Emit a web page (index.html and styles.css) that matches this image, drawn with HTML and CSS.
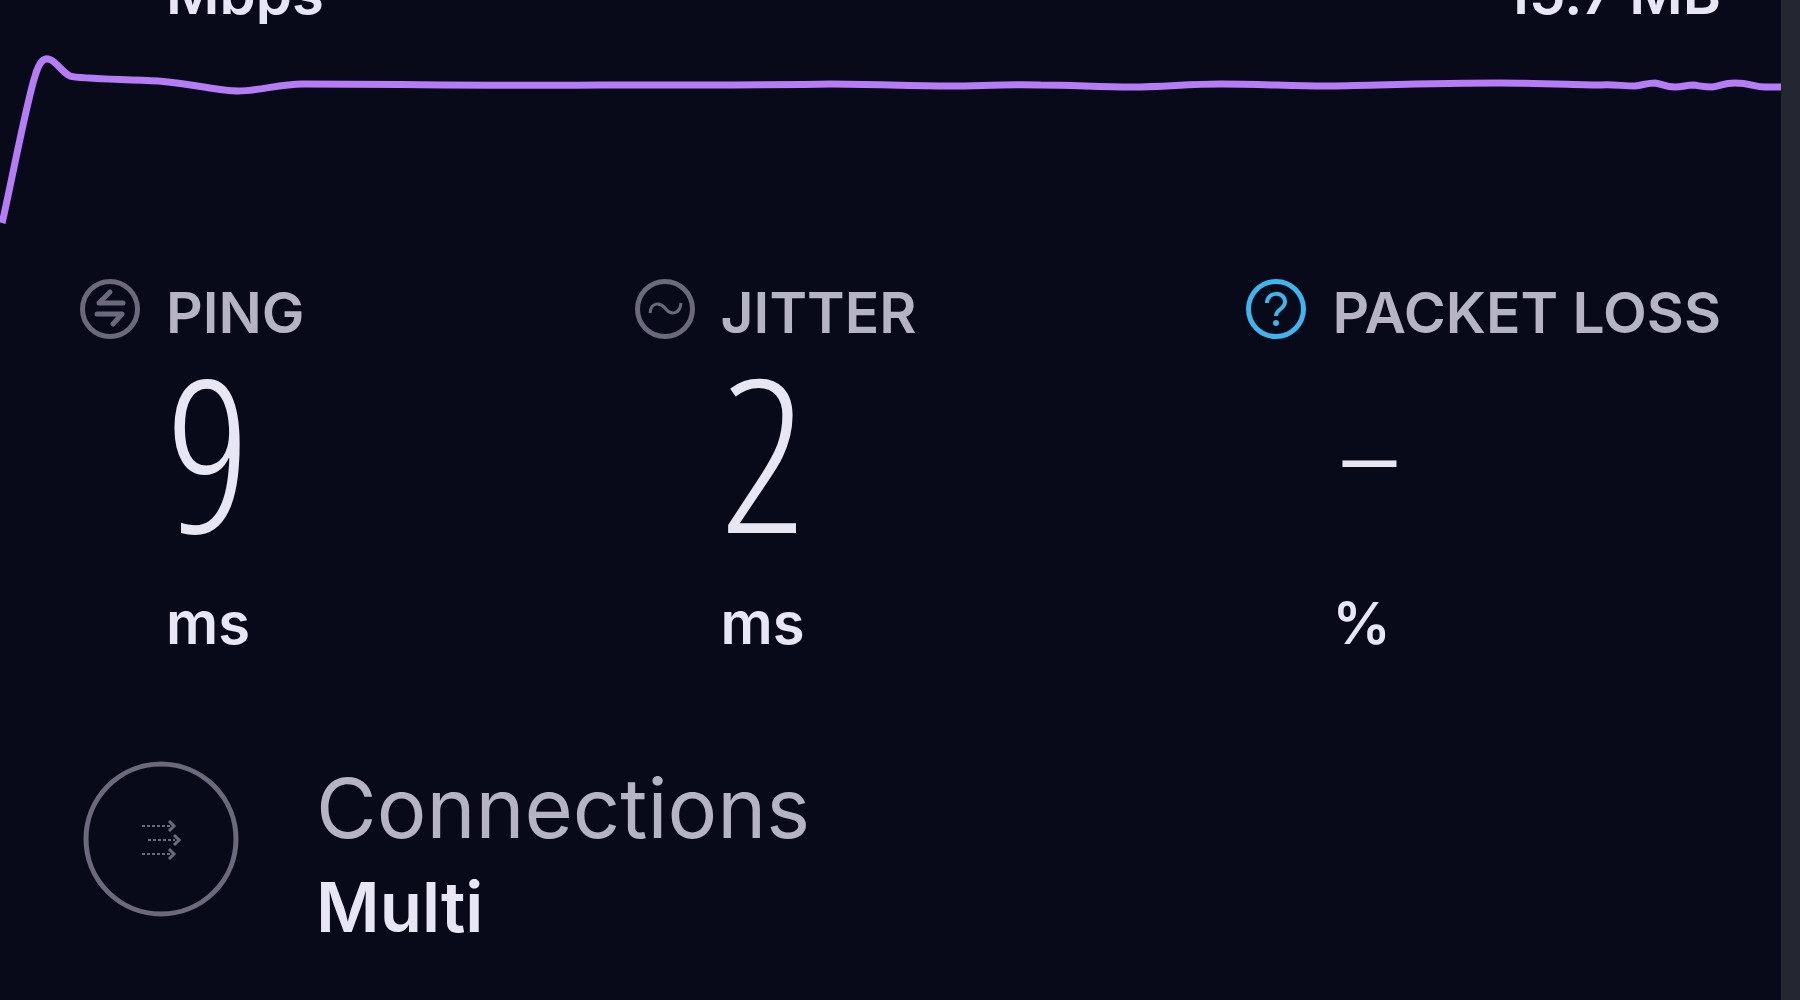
FILE: index.html
```html
<!DOCTYPE html>
<html lang="en">
<head>
  <meta charset="UTF-8" />
  <meta name="viewport" content="width=device-width, initial-scale=1" />
  <title>Speed Test Result</title>
  <link rel="stylesheet" href="styles.css">
</head>
<body>
  <main class="panel">
    <div class="speed-row">
      <span>Mbps</span>
      <span>15.7 MB</span>
    </div>

    <svg class="speed-graph" viewBox="0 24 1780 216" fill="none" aria-hidden="true">
      <path d="M2 223 C9 194 26 104 35 76 C39 62 44 56 51 60 C58 64 63 73 70 76 C82 79 125 79 158 81 C195 84 218 91 238 91 C258 91 280 84 302 84 C400 84 500 86 600 85 C700 85 780 85 830 84 C870 84 910 86 950 86 C980 86 1000 84 1040 85 C1070 85 1100 87 1130 87 C1165 87 1185 84 1220 84 C1260 84 1290 86 1325 86 C1380 85 1440 83 1500 83 C1540 83 1580 85 1600 85 C1612 84 1622 86 1634 86 C1642 85 1647 83 1654 83 C1662 84 1664 87 1674 87 C1682 87 1685 85 1692 85 C1700 86 1704 87 1711 87 C1720 86 1722 83 1734 83 C1749 83 1754 87 1764 87 L1781 87" />
    </svg>

    <section class="metrics">
      <div class="metric">
        <div class="metric-label">
          <svg class="metric-icon" viewBox="0 0 60 60" aria-hidden="true">
            <circle cx="30" cy="30" r="27.5" />
            <path d="M43 24 H19 L30 13 M17 35 H42 L33 45" stroke-linecap="round" stroke-linejoin="round" />
          </svg>
          <span>PING</span>
        </div>
        <div class="metric-value">9</div>
        <div class="metric-unit">ms</div>
      </div>

      <div class="metric">
        <div class="metric-label">
          <svg class="metric-icon" viewBox="0 0 60 60" aria-hidden="true">
            <circle cx="30" cy="30" r="27.5" />
            <path d="M15 34 C16 23 25 23 30 29 C36 37 45 35 46 24" stroke-width="3" />
          </svg>
          <span>JITTER</span>
        </div>
        <div class="metric-value">2</div>
        <div class="metric-unit">ms</div>
      </div>

      <div class="metric">
        <div class="metric-label">
          <button class="help" type="button" aria-label="About packet loss">
            <svg class="metric-icon metric-icon-help" viewBox="0 0 60 60" aria-hidden="true">
              <circle cx="30" cy="30" r="27.5" />
              <path d="M21 24 C21 12 39 12 39 23 C39 30 30 30 30 37" stroke-width="4" />
              <circle class="dot" cx="30" cy="44" r="3" />
            </svg>
          </button>
          <span>PACKET LOSS</span>
        </div>
        <div class="metric-value metric-value-empty">–</div>
        <div class="metric-unit">%</div>
      </div>
    </section>

    <section class="connections">
      <svg class="connections-icon" viewBox="0 0 160 160" aria-hidden="true">
        <circle cx="81" cy="80" r="75" stroke-width="5" />
        <path d="M62 67 H90 M68 81 H95 M62 95 H90" stroke-width="2" stroke-dasharray="3 2" />
        <path d="M89 62 L94 67 L89 72 M94 76 L99 81 L94 86 M89 90 L94 95 L89 100" stroke-width="3" />
      </svg>
      <div>
        <div class="connections-title">Connections</div>
        <div class="connections-mode">Multi</div>
      </div>
    </section>
  </main>
</body>
</html>
```
FILE: styles.css
```css
* {
  box-sizing: border-box;
}

body {
  margin: 0;
  min-height: 100vh;
  padding-right: 19px;
  background-color: #242731;
  color: #e6e6f5;
  font-family: Inter, "Liberation Sans", sans-serif;
  font-weight: 600;
}

.panel {
  min-height: 100vh;
  background-color: #080a1a;
}

.speed-row {
  display: flex;
  justify-content: space-between;
  align-items: flex-end;
  height: 24px;
  padding: 0 60px 0 166px;
  overflow: hidden;
  font-size: 58px;
  line-height: 62px;
}

.speed-graph {
  display: block;
  width: 100%;
  stroke: #b57cf5;
  stroke-width: 7;
}

.metrics {
  display: flex;
  justify-content: space-between;
  padding: 39px 60px 0 80px;
}

.metric-label {
  display: flex;
  align-items: flex-start;
  gap: 26px;
  color: #b4b4c4;
  font-size: 57px;
  line-height: 68px;
}

.metric-icon {
  display: block;
  width: 60px;
  height: 60px;
  fill: none;
  stroke: #6b6a7d;
  stroke-width: 5;
}

.metric-icon-help {
  stroke: #3fb5ee;
}

.metric-icon-help .dot {
  fill: #3fb5ee;
  stroke: none;
}

.help {
  padding: 0;
  border: 0;
  background: none;
  cursor: pointer;
}

.metric-value {
  height: 208px;
  margin-bottom: 34px;
  padding-left: 86px;
  font-family: "Open Sans Condensed Light", "Open Sans", sans-serif;
  font-size: 212px;
  font-weight: 300;
  line-height: 208px;
}

.metric-value-empty {
  padding-left: 96px;
  font-family: "Liberation Sans", sans-serif;
  font-size: 97px;
  line-height: 216px;
}

.metric-unit {
  padding-left: 86px;
  font-size: 58px;
  line-height: 68px;
}

.connections {
  display: flex;
  gap: 76px;
  padding: 102px 60px 40px 80px;
}

.connections-icon {
  width: 160px;
  height: 160px;
  flex-shrink: 0;
  fill: none;
  stroke: #6b6a7d;
}

.connections-title {
  color: #b4b4c4;
  font-size: 83px;
  font-weight: 400;
  line-height: 98px;
}

.connections-mode {
  font-size: 69px;
  font-weight: 600;
  line-height: 100px;
}
```
